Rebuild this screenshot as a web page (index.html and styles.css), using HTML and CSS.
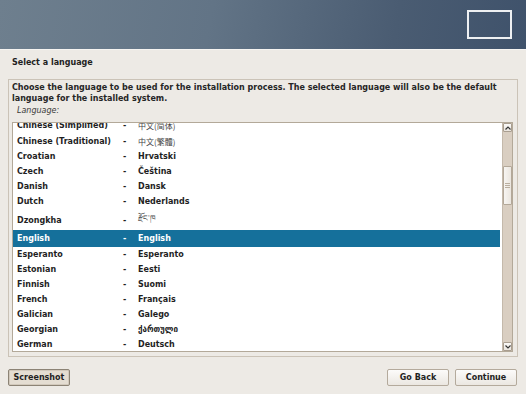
FILE: index.html
```html
<!DOCTYPE html>
<html lang="en">
  <head>
    <meta charset="UTF-8" />
    <meta name="viewport" content="width=device-width, initial-scale=1.0" />
    <title>Select a language</title>
    <link rel="stylesheet" href="styles.css">
  </head>
  <body>
    <header class="banner">
      <div class="banner-box"></div>
    </header>

    <div class="page">
      <h1 class="title">Select a language</h1>

      <section class="frame">
        <p class="prompt">
          Choose the language to be used for the installation process. The selected language will also be the default
          language for the installed system.
        </p>
        <div class="field-label">Language:</div>

        <div class="listbox">
          <div class="list-view">
            <div class="list-rows">
              <div class="row cjk"><span>Chinese (Simplified)</span><span>-</span><span class="native">中文(简体)</span></div>
              <div class="row cjk"><span>Chinese (Traditional)</span><span>-</span><span class="native tc">中文(繁體)</span></div>
              <div class="row"><span>Croatian</span><span>-</span><span>Hrvatski</span></div>
              <div class="row"><span>Czech</span><span>-</span><span>Čeština</span></div>
              <div class="row"><span>Danish</span><span>-</span><span>Dansk</span></div>
              <div class="row"><span>Dutch</span><span>-</span><span>Nederlands</span></div>
              <div class="row tall"><span>Dzongkha</span><span>-</span><span class="native">རྫོང་ཁ</span></div>
              <div class="row selected"><span>English</span><span>-</span><span>English</span></div>
              <div class="row"><span>Esperanto</span><span>-</span><span>Esperanto</span></div>
              <div class="row"><span>Estonian</span><span>-</span><span>Eesti</span></div>
              <div class="row"><span>Finnish</span><span>-</span><span>Suomi</span></div>
              <div class="row"><span>French</span><span>-</span><span>Français</span></div>
              <div class="row"><span>Galician</span><span>-</span><span>Galego</span></div>
              <div class="row"><span>Georgian</span><span>-</span><span>ქართული</span></div>
              <div class="row"><span>German</span><span>-</span><span>Deutsch</span></div>
              <div class="row"><span>Greek</span><span>-</span><span>Ελληνικά</span></div>
            </div>
          </div>
          <div class="scrollbar">
            <div class="scroll-btn">
              <svg width="6" height="4" viewBox="0 0 6 4"><path d="M0.5 3.5 L3 1 L5.5 3.5" fill="none" stroke="#333" stroke-width="1.2"/></svg>
            </div>
            <div class="track">
              <div class="thumb">
                <span></span><span></span><span></span>
              </div>
            </div>
            <div class="scroll-btn">
              <svg width="6" height="4" viewBox="0 0 6 4"><path d="M0.5 0.5 L3 3 L5.5 0.5" fill="none" stroke="#333" stroke-width="1.2"/></svg>
            </div>
          </div>
        </div>
      </section>

      <footer class="buttons">
        <button class="btn btn-screenshot">Screenshot</button>
        <div class="spacer"></div>
        <button class="btn">Go Back</button>
        <button class="btn">Continue</button>
      </footer>
    </div>
  </body>
</html>
```

FILE: styles.css
```css
body {
  margin: 0;
  width: 526px;
  height: 394px;
  overflow: hidden;
  background-color: #edeae5;
  font-family: "DejaVu Sans", "Noto Sans CJK SC", sans-serif;
  font-size: 8px;
  color: #1f1f1f;
}
.banner {
  height: 49px;
  display: flex;
  align-items: center;
  justify-content: flex-end;
  padding-right: 14px;
  background: linear-gradient(100deg, #6e7f8e 0%, #627486 40%, #4a5c72 75%, #3f526b 100%);
  border-bottom: 1px solid #f6f4f1;
}
.banner-box {
  width: 41px;
  height: 25px;
  border: 2px solid #eef0f2;
}
.page {
  padding: 0 8px;
}
.title {
  margin: 8px 0 0 4px;
  font-size: 8px;
  line-height: 10px;
  font-weight: bold;
}
.frame {
  margin-top: 11px;
  border: 1px solid #cbc3b7;
  padding: 2px 4px 4px 3px;
}
.prompt {
  margin: 0;
  font-weight: bold;
  line-height: 11px;
  color: #262626;
}
.field-label {
  margin-top: 2px;
  padding-left: 5px;
  line-height: 10px;
  font-style: italic;
  color: #3a3a3a;
}
.listbox {
  margin-top: 6px;
  height: 228px;
  display: flex;
  border: 1px solid #b3a999;
  background-color: #fff;
}
.list-view {
  flex: 1;
  overflow: hidden;
  margin-right: 2px;
}
.list-rows {
  margin-top: -6px;
}
.row {
  display: grid;
  grid-template-columns: 106px 15px 1fr;
  align-items: center;
  height: 15px;
  padding-left: 4px;
  font-weight: bold;
}
.row.cjk {
  height: 16px;
}
.row.tall {
  height: 21px;
}
.row.selected {
  height: 17px;
  background-color: #15709b;
  color: #fff;
}
.native {
  font-weight: normal;
  color: #444;
  font-family: "Noto Sans CJK SC", "DejaVu Sans", sans-serif;
}
.native.tc {
  font-family: "Noto Sans CJK TC", "DejaVu Sans", sans-serif;
}
.scrollbar {
  width: 10px;
  display: flex;
  flex-direction: column;
  background-color: #d9cec1;
  border-left: 1px solid #c4b9ab;
  box-sizing: border-box;
}
.scroll-btn {
  height: 9px;
  display: flex;
  align-items: center;
  justify-content: center;
  background: linear-gradient(#fbfaf8, #e9e4dd);
  border: 1px solid #a99e90;
  border-radius: 1px;
  box-sizing: border-box;
}
.track {
  flex: 1;
  padding-top: 34px;
}
.thumb {
  height: 39px;
  display: flex;
  flex-direction: column;
  align-items: center;
  justify-content: center;
  gap: 1px;
  background: linear-gradient(90deg, #f7f5f2, #ebe6df);
  border: 1px solid #b3a899;
  border-radius: 1px;
  box-sizing: border-box;
}
.thumb span {
  width: 5px;
  height: 1px;
  background-color: #b9ae9f;
}
.buttons {
  display: flex;
  gap: 6px;
  margin-top: 12px;
  padding-right: 1px;
}
.spacer {
  flex: 1;
}
.btn {
  width: 62px;
  height: 17px;
  padding: 0;
  font-family: "DejaVu Sans", sans-serif;
  font-size: 8px;
  font-weight: bold;
  color: #1f1f1f;
  background: linear-gradient(#fcfbfa, #ebe7e1);
  border: 1px solid #b4aa9c;
  border-radius: 2px;
}
.btn-screenshot {
  background: #e4ddd2;
  border: 1px solid #8c8375;
  box-shadow: inset 0 0 0 1px #d2c9bc;
}
```
